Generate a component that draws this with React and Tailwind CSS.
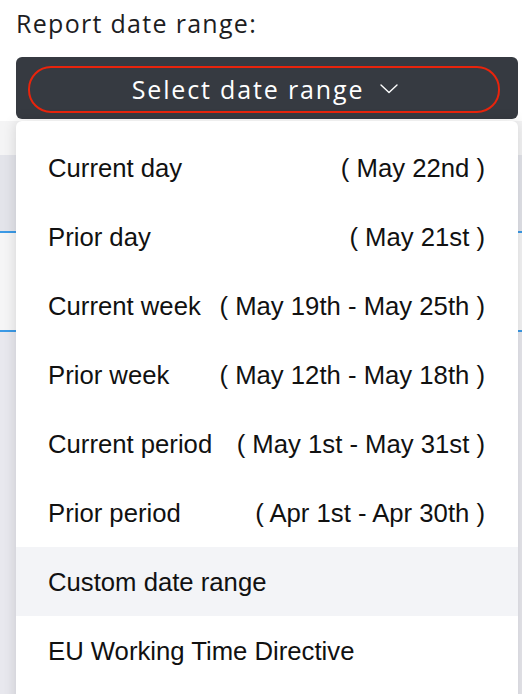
const options = [
  { label: "Current day", range: "( May 22nd )" },
  { label: "Prior day", range: "( May 21st )" },
  { label: "Current week", range: "( May 19th - May 25th )" },
  { label: "Prior week", range: "( May 12th - May 18th )" },
  { label: "Current period", range: "( May 1st - May 31st )" },
  { label: "Prior period", range: "( Apr 1st - Apr 30th )" },
  { label: "Custom date range", active: true },
  { label: "EU Working Time Directive" },
];

const ChevronDown = () => (
  <svg width="18" height="10" viewBox="0 0 18 10" fill="none">
    <polyline points="1,1 9,8.5 17,1" stroke="#ffffff" strokeWidth="1.4" strokeLinecap="round" strokeLinejoin="round" />
  </svg>
);

const App = () => {
  return (
    <div className="relative w-full h-[694px] overflow-hidden bg-white">
      <div className="pl-4 pr-1">
        <p className="pt-[6px] text-[25px] leading-[34px] tracking-[1.3px] text-[#1d1d1f] font-['Open_Sans',sans-serif]">
          Report date range:
        </p>
        <button className="mt-[17px] w-full bg-[#363a41] rounded-md pl-3 pr-[18px] pt-[9px] pb-[6px] block">
          <div className="h-[47px] border-2 border-[#e8240c] rounded-[23px] flex items-center justify-center gap-[16px] pb-[2px] pl-[2px]">
            <span className="text-white text-[25px] leading-[34px] tracking-[1.85px] font-['Open_Sans',sans-serif]">
              Select date range
            </span>
            <ChevronDown />
          </div>
        </button>
      </div>

      {/* page content behind the open menu */}
      <div className="mt-[2px]">
        <div className="h-[34px] bg-[#f4f4f5]"></div>
        <div className="h-[78px] bg-[#e3e4ea] border-b-2 border-[#3b9ae6]"></div>
        <div className="h-[99px] bg-[#f5f5f6] border-b-2 border-[#3b9ae6]"></div>
        <div className="h-[400px] bg-[#e8e8ee]"></div>
      </div>

      <div className="absolute top-[121px] left-4 right-1 bottom-[-20px] bg-white rounded-t-md shadow-[0_0_14px_rgba(0,0,0,0.14)] pt-3 font-['Liberation_Sans',Arial,sans-serif] text-[25.7px] text-[#111111]">
        {options.map((o) => (
          <div
            key={o.label}
            className={`h-[69px] flex items-center justify-between gap-4 pl-8 pr-[33px] leading-[29px] pt-[1px] ${o.active ? "bg-[#f3f4f7]" : ""}`}
          >
            <span className="whitespace-nowrap">{o.label}</span>
            {o.range && <span className="whitespace-nowrap">{o.range}</span>}
          </div>
        ))}
      </div>
    </div>
  );
};

export default App;
